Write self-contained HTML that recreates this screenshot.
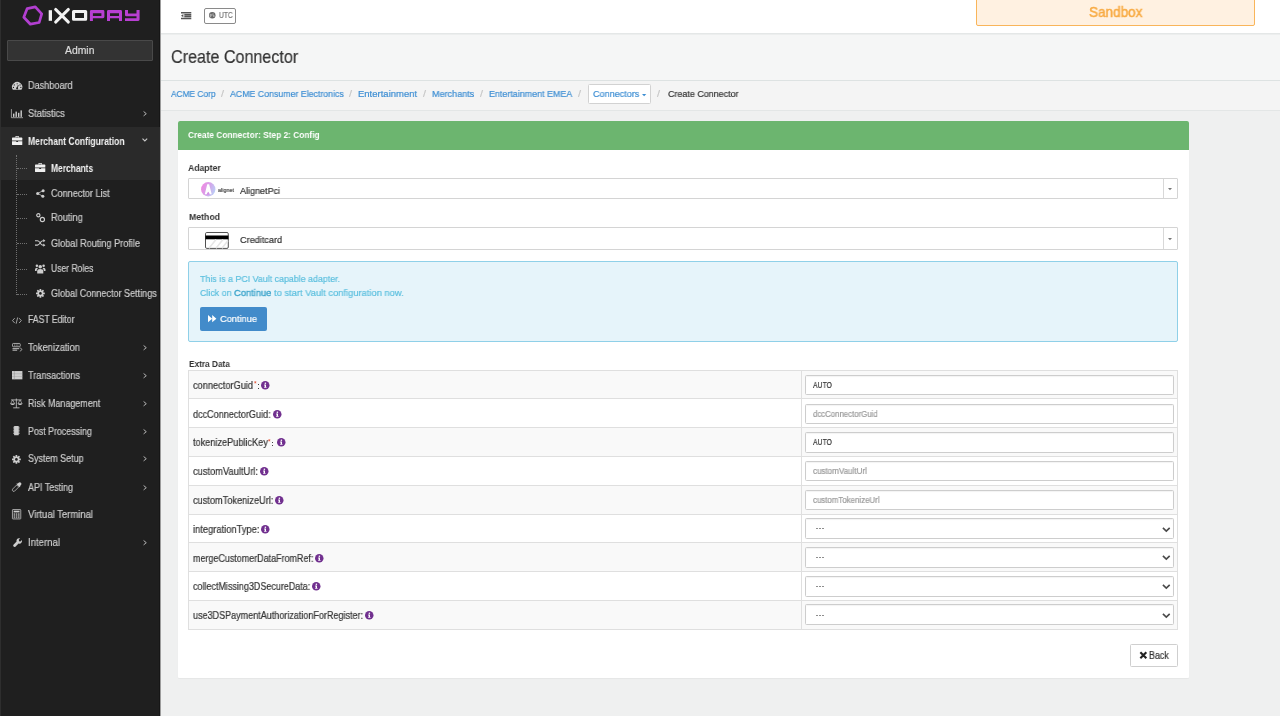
<!DOCTYPE html>
<html><head><meta charset="utf-8"><title>Create Connector</title>
<style>
*{box-sizing:border-box;margin:0;padding:0}
html,body{width:1280px;height:716px;overflow:hidden;background:#eff0f0;font-family:"Liberation Sans",sans-serif;color:#333}
.tx{position:absolute;white-space:nowrap;will-change:transform;-webkit-text-stroke-width:0.2px}
.ic{position:absolute;overflow:visible}
.bx{position:absolute}
</style></head><body>
<div class="bx" style="left:0;top:0;width:160px;height:716px;background:#1f1f1f"></div>
<div class="bx" style="left:0;top:0;width:1px;height:716px;background:#2e2e2e"></div>
<div class="bx" style="left:159px;top:0;width:1px;height:716px;background:#161616"></div>
<div class="bx" style="left:160px;top:0;width:1px;height:716px;background:#9c9c9c"></div>
<div class="bx" style="left:1px;top:126.6px;width:158.6px;height:53.5px;background:#2a2a2a"></div>
<svg class="ic" style="left:0px;top:0px;width:160px;height:30px;" viewBox="0 0 160 30"><path d="M27.2,8.6 L35.3,6.9 L41.7,13.8 L39.2,22.5 L30.4,24.2 L23.8,17.2 Z" fill="none" stroke="#b23fd0" stroke-width="2.7" stroke-linejoin="round"/><rect x="48.7" y="10.2" width="3.3" height="10.6" fill="#f2f2f2"/><path d="M55.6,9.4 L68.4,22.1 M68.4,9.4 L55.6,22.1" stroke="#f2f2f2" stroke-width="2.9" stroke-linecap="round"/><path d="M73.6,9.9 L85.6,9.9 Q87.2,9.9 87.2,11.5 L87.2,19.2 Q87.2,20.8 85.6,20.8 L73.6,20.8 Q72,20.8 72,19.2 L72,11.5 Q72,9.9 73.6,9.9 Z M75.1,13 L75.1,17.9 L84,17.9 L84,13 Z" fill="#f2f2f2" fill-rule="evenodd"/><g fill="#b83fd2" fill-rule="evenodd"><path d="M89.9,21 L89.9,11.4 Q89.9,10 91.3,10 L103,10 Q104.4,10 104.4,11.4 L104.4,16.8 Q104.4,18.2 103,18.2 L92.9,18.2 L92.9,21 Z M92.9,13.2 L92.9,16.1 L101.4,16.1 L101.4,13.2 Z"/><path d="M107,21 L107,11.4 Q107,10 108.4,10 L120.6,10 Q122,10 122,11.4 L122,21 L119,21 L119,18.2 L110,18.2 L110,21 Z M110,13.2 L110,16.1 L119,16.1 L119,13.2 Z"/><path d="M125,10 L128,10 L128,13.4 L136.5,13.4 L136.5,10 L139.6,10 L139.6,19.6 Q139.6,21 138.2,21 L125,21 L125,18.2 L136.5,18.2 L136.5,16.3 L126.4,16.3 Q125,16.3 125,14.9 Z"/></g></svg>
<div class="bx" style="left:7px;top:40px;width:146px;height:21px;background:#333;border:1px solid #494949;border-radius:1px"></div>
<div class="tx" style="left:65.00px;top:44px;font-size:10.4px;line-height:13.52px;letter-spacing:0.000px;color:#dcdcdc;font-weight:normal;transform:scaleX(0.9972);transform-origin:0 0;">Admin</div>
<div class="tx" style="left:27.65px;top:79px;font-size:10.0px;line-height:13.0px;letter-spacing:0.000px;color:#cdcdcd;font-weight:normal;transform:scaleX(0.9126);transform-origin:0 0;">Dashboard</div>
<div class="tx" style="left:27.65px;top:107px;font-size:10.0px;line-height:13.0px;letter-spacing:0.000px;color:#cdcdcd;font-weight:normal;transform:scaleX(0.9188);transform-origin:0 0;">Statistics</div>
<svg class="ic" style="left:142.8px;top:110.9px;width:4.2px;height:5.4px;" viewBox="0 0 4.2 5.4"><path d="M0.6,0.5 L3.3,2.7 L0.6,4.9" fill="none" stroke="#b5b5b5" stroke-width="1"/></svg>
<div class="tx" style="left:27.65px;top:135px;font-size:10.0px;line-height:13.0px;letter-spacing:0.000px;color:#f2f2f2;font-weight:bold;transform:scaleX(0.8561);transform-origin:0 0;-webkit-text-stroke-width:0;">Merchant Configuration</div>
<svg class="ic" style="left:142px;top:138.3px;width:5.7px;height:3.7px;" viewBox="0 0 5.7 3.7"><path d="M0.5,0.6 L2.85,3.0 L5.2,0.6" fill="none" stroke="#c8c8c8" stroke-width="1.1"/></svg>
<div class="tx" style="left:27.65px;top:313px;font-size:10.0px;line-height:13.0px;letter-spacing:0.000px;color:#cdcdcd;font-weight:normal;transform:scaleX(0.8646);transform-origin:0 0;">FAST Editor</div>
<div class="tx" style="left:27.65px;top:341px;font-size:10.0px;line-height:13.0px;letter-spacing:0.000px;color:#cdcdcd;font-weight:normal;transform:scaleX(0.9344);transform-origin:0 0;">Tokenization</div>
<svg class="ic" style="left:142.8px;top:344.9px;width:4.2px;height:5.4px;" viewBox="0 0 4.2 5.4"><path d="M0.6,0.5 L3.3,2.7 L0.6,4.9" fill="none" stroke="#b5b5b5" stroke-width="1"/></svg>
<div class="tx" style="left:27.65px;top:369px;font-size:10.0px;line-height:13.0px;letter-spacing:0.000px;color:#cdcdcd;font-weight:normal;transform:scaleX(0.9134);transform-origin:0 0;">Transactions</div>
<svg class="ic" style="left:142.8px;top:373.0px;width:4.2px;height:5.4px;" viewBox="0 0 4.2 5.4"><path d="M0.6,0.5 L3.3,2.7 L0.6,4.9" fill="none" stroke="#b5b5b5" stroke-width="1"/></svg>
<div class="tx" style="left:27.65px;top:397px;font-size:10.0px;line-height:13.0px;letter-spacing:0.000px;color:#cdcdcd;font-weight:normal;transform:scaleX(0.8964);transform-origin:0 0;">Risk Management</div>
<svg class="ic" style="left:142.8px;top:400.79999999999995px;width:4.2px;height:5.4px;" viewBox="0 0 4.2 5.4"><path d="M0.6,0.5 L3.3,2.7 L0.6,4.9" fill="none" stroke="#b5b5b5" stroke-width="1"/></svg>
<div class="tx" style="left:27.65px;top:425px;font-size:10.0px;line-height:13.0px;letter-spacing:0.000px;color:#cdcdcd;font-weight:normal;transform:scaleX(0.8824);transform-origin:0 0;">Post Processing</div>
<svg class="ic" style="left:142.8px;top:428.7px;width:4.2px;height:5.4px;" viewBox="0 0 4.2 5.4"><path d="M0.6,0.5 L3.3,2.7 L0.6,4.9" fill="none" stroke="#b5b5b5" stroke-width="1"/></svg>
<div class="tx" style="left:27.65px;top:452px;font-size:10.0px;line-height:13.0px;letter-spacing:0.000px;color:#cdcdcd;font-weight:normal;transform:scaleX(0.8924);transform-origin:0 0;">System Setup</div>
<svg class="ic" style="left:142.8px;top:456.4px;width:4.2px;height:5.4px;" viewBox="0 0 4.2 5.4"><path d="M0.6,0.5 L3.3,2.7 L0.6,4.9" fill="none" stroke="#b5b5b5" stroke-width="1"/></svg>
<div class="tx" style="left:27.65px;top:481px;font-size:10.0px;line-height:13.0px;letter-spacing:0.000px;color:#cdcdcd;font-weight:normal;transform:scaleX(0.8938);transform-origin:0 0;">API Testing</div>
<svg class="ic" style="left:142.8px;top:484.59999999999997px;width:4.2px;height:5.4px;" viewBox="0 0 4.2 5.4"><path d="M0.6,0.5 L3.3,2.7 L0.6,4.9" fill="none" stroke="#b5b5b5" stroke-width="1"/></svg>
<div class="tx" style="left:27.65px;top:508px;font-size:10.0px;line-height:13.0px;letter-spacing:0.000px;color:#cdcdcd;font-weight:normal;transform:scaleX(0.9475);transform-origin:0 0;">Virtual Terminal</div>
<div class="tx" style="left:27.65px;top:536px;font-size:10.0px;line-height:13.0px;letter-spacing:0.000px;color:#cdcdcd;font-weight:normal;transform:scaleX(0.9580);transform-origin:0 0;">Internal</div>
<svg class="ic" style="left:142.8px;top:540.0px;width:4.2px;height:5.4px;" viewBox="0 0 4.2 5.4"><path d="M0.6,0.5 L3.3,2.7 L0.6,4.9" fill="none" stroke="#b5b5b5" stroke-width="1"/></svg>
<div class="tx" style="left:50.90px;top:162px;font-size:10.0px;line-height:13.0px;letter-spacing:0.000px;color:#f5f5f5;font-weight:bold;transform:scaleX(0.8436);transform-origin:0 0;-webkit-text-stroke-width:0;">Merchants</div>
<div class="bx" style="left:16.5px;top:168.4px;width:10px;height:0;border-top:1px dotted #707070"></div>
<div class="tx" style="left:50.90px;top:187px;font-size:10.0px;line-height:13.0px;letter-spacing:0.000px;color:#cdcdcd;font-weight:normal;transform:scaleX(0.9089);transform-origin:0 0;">Connector List</div>
<div class="bx" style="left:16.5px;top:193.5px;width:10px;height:0;border-top:1px dotted #707070"></div>
<div class="tx" style="left:50.90px;top:211px;font-size:10.0px;line-height:13.0px;letter-spacing:0.000px;color:#cdcdcd;font-weight:normal;transform:scaleX(0.9210);transform-origin:0 0;">Routing</div>
<div class="bx" style="left:16.5px;top:217.9px;width:10px;height:0;border-top:1px dotted #707070"></div>
<div class="tx" style="left:50.90px;top:237px;font-size:10.0px;line-height:13.0px;letter-spacing:0.000px;color:#cdcdcd;font-weight:normal;transform:scaleX(0.9149);transform-origin:0 0;">Global Routing Profile</div>
<div class="bx" style="left:16.5px;top:243.2px;width:10px;height:0;border-top:1px dotted #707070"></div>
<div class="tx" style="left:50.90px;top:262px;font-size:10.0px;line-height:13.0px;letter-spacing:0.000px;color:#cdcdcd;font-weight:normal;transform:scaleX(0.8554);transform-origin:0 0;">User Roles</div>
<div class="bx" style="left:16.5px;top:268.6px;width:10px;height:0;border-top:1px dotted #707070"></div>
<div class="tx" style="left:50.90px;top:287px;font-size:10.0px;line-height:13.0px;letter-spacing:0.000px;color:#cdcdcd;font-weight:normal;transform:scaleX(0.9062);transform-origin:0 0;">Global Connector Settings</div>
<div class="bx" style="left:16.5px;top:293.6px;width:10px;height:0;border-top:1px dotted #707070"></div>
<div class="bx" style="left:15.5px;top:155px;width:0;height:139.5px;border-left:1px dotted #707070"></div>
<svg class="ic" style="left:11.9px;top:82.4px;width:10.3px;height:7.8px;" viewBox="0 0 20 15.2"><path d="M1.6,15.2 A10,10 0 1 1 18.4,15.2 Z" fill="#cdcdcd"/><circle cx="10" cy="3.4" r="1.2" fill="#1f1f1f"/><circle cx="4.4" cy="5.8" r="1.2" fill="#1f1f1f"/><circle cx="15.6" cy="5.8" r="1.2" fill="#1f1f1f"/><circle cx="2.8" cy="10.6" r="1.2" fill="#1f1f1f"/><circle cx="17.2" cy="10.6" r="1.2" fill="#1f1f1f"/><path d="M10,12.4 L12.2,6" stroke="#1f1f1f" stroke-width="1.8"/><circle cx="10" cy="12.4" r="2" fill="#1f1f1f"/></svg>
<svg class="ic" style="left:11px;top:108.8px;width:12px;height:9.2px;" viewBox="0 0 24 18"><path d="M0.8,0 L0.8,17.2 L24,17.2" fill="none" stroke="#cdcdcd" stroke-width="1.4"/><rect x="4" y="9" width="2.8" height="6.6" fill="#cdcdcd"/><rect x="9" y="5" width="2.8" height="10.6" fill="#cdcdcd"/><rect x="14" y="7.4" width="2.8" height="8.2" fill="#cdcdcd"/><rect x="19" y="2.6" width="2.8" height="13" fill="#cdcdcd"/></svg>
<svg class="ic" style="left:11.9px;top:136px;width:10.3px;height:9px;" viewBox="0 0 20 17.5"><path d="M6.6,3 L6.6,1.2 Q6.6,0 7.8,0 L12.2,0 Q13.4,0 13.4,1.2 L13.4,3 L11.8,3 L11.8,1.4 L8.2,1.4 L8.2,3 Z" fill="#f0f0f0"/><path d="M1.2,3 L18.8,3 Q20,3 20,4.2 L20,8.6 L0,8.6 L0,4.2 Q0,3 1.2,3 Z" fill="#f0f0f0"/><path d="M0,10 L8.2,10 L8.2,11.6 L11.8,11.6 L11.8,10 L20,10 L20,16.3 Q20,17.5 18.8,17.5 L1.2,17.5 Q0,17.5 0,16.3 Z" fill="#f0f0f0"/></svg>
<svg class="ic" style="left:12px;top:316.8px;width:9.8px;height:7.2px;" viewBox="0 0 20 14"><path d="M5.5,2 L1,7 L5.5,12 M14.5,2 L19,7 L14.5,12 M11.6,0.6 L8.4,13.4" fill="none" stroke="#cdcdcd" stroke-width="1.5"/></svg>
<svg class="ic" style="left:12.2px;top:342.8px;width:10.3px;height:9px;" viewBox="0 0 20 17.5"><rect x="1" y="0.9" width="15" height="6.4" rx="1.6" fill="none" stroke="#cdcdcd" stroke-width="1.5"/><path d="M4,4.1 L13,4.1" stroke="#cdcdcd" stroke-width="1.4" stroke-dasharray="2 1.2"/><path d="M1,11 L14,11 M1,14 L10,14" stroke="#cdcdcd" stroke-width="1.8"/><path d="M16,9 L19,12.4 L16,16.4" fill="none" stroke="#cdcdcd" stroke-width="1.6"/></svg>
<svg class="ic" style="left:11.9px;top:370.8px;width:10.4px;height:8.4px;" viewBox="0 0 20 16"><rect x="0" y="0" width="20" height="16" fill="#cdcdcd"/><path d="M0,5.2 L20,5.2 M0,10.6 L20,10.6" stroke="#9a9a9a" stroke-width="0.8"/><path d="M4.5,0 L4.5,16" stroke="#8a8a8a" stroke-width="1"/></svg>
<svg class="ic" style="left:10.2px;top:398.2px;width:12.7px;height:10.6px;" viewBox="0 0 24 20"><path d="M12,1 L12,18.5 M6,18.6 L18,18.6 M2,3.6 L22,3.6" stroke="#cdcdcd" stroke-width="1.5" fill="none"/><path d="M5,3.6 L1,11 L9,11 Z M19,3.6 L15,11 L23,11 Z" fill="none" stroke="#cdcdcd" stroke-width="1.2"/><path d="M0.8,11 Q5,15.6 9.2,11 Z M14.8,11 Q19,15.6 23.2,11 Z" fill="#cdcdcd"/></svg>
<svg class="ic" style="left:13px;top:426.4px;width:6.8px;height:9.3px;" viewBox="0 0 13 18"><rect x="2" y="0" width="9" height="18" rx="1" fill="#cdcdcd"/><path d="M0,2.5 L13,2.5 M0,5.5 L13,5.5 M0,8.5 L13,8.5 M0,11.5 L13,11.5 M0,14.5 L13,14.5" stroke="#cdcdcd" stroke-width="1.2"/></svg>
<svg class="ic" style="left:12.4px;top:455.2px;width:8.8px;height:8.8px;" viewBox="0 0 20 20"><g fill="#cdcdcd"><circle cx="10" cy="10" r="6.8"/><rect x="8" y="0" width="4" height="20" rx="0.6"/><rect x="8" y="0" width="4" height="20" rx="0.6" transform="rotate(45 10 10)"/><rect x="8" y="0" width="4" height="20" rx="0.6" transform="rotate(90 10 10)"/><rect x="8" y="0" width="4" height="20" rx="0.6" transform="rotate(135 10 10)"/></g><circle cx="10" cy="10" r="3" fill="#1f1f1f"/></svg>
<svg class="ic" style="left:12.4px;top:482.2px;width:9.8px;height:9.6px;" viewBox="0 0 20 20"><path d="M13.5,1.5 Q16,-0.8 18.5,1.5 Q20.8,4 18.5,6.5 L16.3,8.7 L17.3,9.7 L15.9,11.1 L8.9,4.1 L10.3,2.7 L11.3,3.7 Z" fill="#cdcdcd"/><path d="M9.6,6.2 L13.8,10.4 L5,19.2 L2,19.4 L0.8,18.2 L0.8,15 Z" fill="none" stroke="#cdcdcd" stroke-width="1.5"/></svg>
<svg class="ic" style="left:11.9px;top:509.3px;width:9.2px;height:10.5px;" viewBox="0 0 18 20"><rect x="0.8" y="0.8" width="16.4" height="18.4" rx="1" fill="none" stroke="#cdcdcd" stroke-width="1.5"/><rect x="3.2" y="3" width="11.6" height="3.4" fill="#cdcdcd"/><g fill="#cdcdcd"><rect x="3.2" y="8.4" width="3" height="2.4"/><rect x="7.5" y="8.4" width="3" height="2.4"/><rect x="11.8" y="8.4" width="3" height="2.4"/><rect x="3.2" y="12.2" width="3" height="2.4"/><rect x="7.5" y="12.2" width="3" height="2.4"/><rect x="11.8" y="12.2" width="3" height="2.4"/><rect x="3.2" y="16" width="3" height="1.6"/><rect x="7.5" y="16" width="3" height="1.6"/><rect x="11.8" y="16" width="3" height="1.6"/></g></svg>
<svg class="ic" style="left:13px;top:537.9px;width:9.2px;height:9.2px;" viewBox="0 0 20 20"><path d="M19.4,4.6 L16.2,7.6 L13.2,7 L12.6,4 L15.6,0.8 Q11.6,-0.6 9,2 Q6.8,4.4 7.8,7.6 L1,14.6 Q-0.6,16.4 1.2,18.6 Q3.4,20.4 5.2,18.8 L12.2,12 Q15.6,13 17.8,10.8 Q20.6,8.2 19.4,4.6 Z" fill="#cdcdcd"/></svg>
<svg class="ic" style="left:35.1px;top:162.9px;width:10.3px;height:9px;" viewBox="0 0 20 17.5"><path d="M6.6,3 L6.6,1.2 Q6.6,0 7.8,0 L12.2,0 Q13.4,0 13.4,1.2 L13.4,3 L11.8,3 L11.8,1.4 L8.2,1.4 L8.2,3 Z" fill="#f0f0f0"/><path d="M1.2,3 L18.8,3 Q20,3 20,4.2 L20,8.6 L0,8.6 L0,4.2 Q0,3 1.2,3 Z" fill="#f0f0f0"/><path d="M0,10 L8.2,10 L8.2,11.6 L11.8,11.6 L11.8,10 L20,10 L20,16.3 Q20,17.5 18.8,17.5 L1.2,17.5 Q0,17.5 0,16.3 Z" fill="#f0f0f0"/></svg>
<svg class="ic" style="left:35.7px;top:189px;width:8.8px;height:8.8px;" viewBox="0 0 18 18"><circle cx="14.6" cy="3.4" r="3.1" fill="#cdcdcd"/><circle cx="3.4" cy="9" r="3.1" fill="#cdcdcd"/><circle cx="14" cy="14.8" r="3.1" fill="#cdcdcd"/><path d="M14.6,3.4 L3.4,9 L14,14.8" stroke="#cdcdcd" stroke-width="1.5" fill="none"/></svg>
<svg class="ic" style="left:35.5px;top:212.9px;width:9.2px;height:9.2px;" viewBox="0 0 9.2 9.2"><circle cx="2.35" cy="2.3" r="1.65" fill="none" stroke="#cdcdcd" stroke-width="1.15"/><circle cx="6.4" cy="6.5" r="2.1" fill="none" stroke="#cdcdcd" stroke-width="1.15"/></svg>
<svg class="ic" style="left:34.8px;top:239px;width:10.4px;height:7.8px;" viewBox="0 0 20 15"><path d="M0,3.2 L4.6,3.2 Q7,3.2 9,6.2 L11,9 Q13,11.8 15.4,11.8 L17,11.8 M0,11.8 L4.6,11.8 Q7,11.8 9,8.8 L11,6 Q13,3.2 15.4,3.2 L17,3.2" fill="none" stroke="#cdcdcd" stroke-width="2"/><path d="M16,0 L20,3.2 L16,6.4 Z M16,8.6 L20,11.8 L16,15 Z" fill="#cdcdcd"/></svg>
<svg class="ic" style="left:34.8px;top:263.7px;width:10.5px;height:9.6px;" viewBox="0 0 20 18"><circle cx="10" cy="5.2" r="3.4" fill="#cdcdcd"/><path d="M4.2,18 L4.2,13.4 Q4.2,9.4 10,9.4 Q15.8,9.4 15.8,13.4 L15.8,18 Z" fill="#cdcdcd"/><circle cx="3.6" cy="3.4" r="2.4" fill="#cdcdcd"/><circle cx="16.4" cy="3.4" r="2.4" fill="#cdcdcd"/><path d="M0,13 L0,10.4 Q0,7 3.8,7 L5.6,7.8 Q3,9.6 3,13 Z M20,13 L20,10.4 Q20,7 16.2,7 L14.4,7.8 Q17,9.6 17,13 Z" fill="#cdcdcd"/></svg>
<svg class="ic" style="left:35.8px;top:289.2px;width:8.8px;height:8.8px;" viewBox="0 0 20 20"><g fill="#cdcdcd"><circle cx="10" cy="10" r="6.8"/><rect x="8" y="0" width="4" height="20" rx="0.6"/><rect x="8" y="0" width="4" height="20" rx="0.6" transform="rotate(45 10 10)"/><rect x="8" y="0" width="4" height="20" rx="0.6" transform="rotate(90 10 10)"/><rect x="8" y="0" width="4" height="20" rx="0.6" transform="rotate(135 10 10)"/></g><circle cx="10" cy="10" r="3" fill="#1f1f1f"/></svg>
<div class="bx" style="left:161px;top:0;width:1119px;height:33px;background:#fff"></div>
<div class="bx" style="left:161px;top:33px;width:1119px;height:1px;background:#e4e7e7"></div>
<div class="bx" style="left:161px;top:34px;width:1119px;height:1px;background:#eceeee"></div>
<svg class="ic" style="left:181px;top:11.6px;width:10.3px;height:7.3px;" viewBox="0 0 20 14.2"><path d="M0,1.4 L20,1.4 M6.4,5.5 L20,5.5 M6.4,8.9 L20,8.9 M0,12.8 L20,12.8" stroke="#555" stroke-width="2.8"/><path d="M0,7.2 L4.6,4.1 L4.6,10.3 Z" fill="#555"/></svg>
<div class="bx" style="left:204px;top:8px;width:31.8px;height:16.2px;border:1px solid #8a8a8a;border-radius:2px;background:#fff"></div>
<svg class="ic" style="left:209px;top:12px;width:6.5px;height:6.5px;" viewBox="0 0 20 20"><circle cx="10" cy="10" r="10" fill="#666"/><path d="M3,6 Q7,4 9,8 Q10,11 7,13 L6,18 Q2,15 1.5,10 Z M12,2 Q16,5 13,8 Q17,9 18,13 Q15,17 13,15 Q12,11 10,9 Z" fill="#aaa"/></svg>
<div class="tx" style="left:219.20px;top:10px;font-size:8.6px;line-height:11.18px;letter-spacing:0.000px;color:#777;font-weight:normal;transform:scaleX(0.7809);transform-origin:0 0;">UTC</div>
<div class="bx" style="left:976px;top:-2px;width:279px;height:27.8px;border:1px solid #f9b55a;border-radius:2px;background:#fff1e1"></div>
<div class="tx" style="left:1088.60px;top:3px;font-size:14.2px;line-height:18.46px;letter-spacing:0.000px;color:#f8ab44;font-weight:normal;transform:scaleX(0.9526);transform-origin:0 0;-webkit-text-stroke-width:0.5px;">Sandbox</div>
<div class="bx" style="left:161px;top:35px;width:1119px;height:45px;background:#f5f6f6"></div>
<div class="bx" style="left:161px;top:80px;width:1119px;height:1px;background:#dde2e2"></div>
<div class="tx" style="left:171.25px;top:46px;font-size:18.2px;line-height:23.66px;letter-spacing:0.000px;color:#333;font-weight:normal;transform:scaleX(0.8859);transform-origin:0 0;">Create Connector</div>
<div class="bx" style="left:161px;top:81px;width:1119px;height:29px;background:#f4f4f4"></div>
<div class="bx" style="left:161px;top:110px;width:1119px;height:1px;background:#e3e6e6"></div>
<div class="tx" style="left:170.50px;top:88px;font-size:9.5px;line-height:12.35px;letter-spacing:0.000px;color:#3d8ed3;font-weight:normal;transform:scaleX(0.8780);transform-origin:0 0;">ACME Corp</div>
<div class="tx" style="left:229.50px;top:88px;font-size:9.5px;line-height:12.35px;letter-spacing:0.000px;color:#3d8ed3;font-weight:normal;transform:scaleX(0.9248);transform-origin:0 0;">ACME Consumer Electronics</div>
<div class="tx" style="left:358.00px;top:88px;font-size:9.5px;line-height:12.35px;letter-spacing:0.000px;color:#3d8ed3;font-weight:normal;transform:scaleX(0.9977);transform-origin:0 0;">Entertainment</div>
<div class="tx" style="left:431.50px;top:88px;font-size:9.5px;line-height:12.35px;letter-spacing:0.000px;color:#3d8ed3;font-weight:normal;transform:scaleX(0.9528);transform-origin:0 0;">Merchants</div>
<div class="tx" style="left:488.60px;top:88px;font-size:9.5px;line-height:12.35px;letter-spacing:0.000px;color:#3d8ed3;font-weight:normal;transform:scaleX(0.9391);transform-origin:0 0;">Entertainment EMEA</div>
<div class="tx" style="left:221.00px;top:88px;font-size:9.5px;line-height:12.35px;letter-spacing:0.000px;color:#c6c6c6;font-weight:normal;transform:scaleX(1.1278);transform-origin:0 0;">/</div>
<div class="tx" style="left:349.00px;top:88px;font-size:9.5px;line-height:12.35px;letter-spacing:0.000px;color:#c6c6c6;font-weight:normal;transform:scaleX(1.1278);transform-origin:0 0;">/</div>
<div class="tx" style="left:422.75px;top:88px;font-size:9.5px;line-height:12.35px;letter-spacing:0.000px;color:#c6c6c6;font-weight:normal;transform:scaleX(1.1278);transform-origin:0 0;">/</div>
<div class="tx" style="left:479.50px;top:88px;font-size:9.5px;line-height:12.35px;letter-spacing:0.000px;color:#c6c6c6;font-weight:normal;transform:scaleX(1.1278);transform-origin:0 0;">/</div>
<div class="tx" style="left:577.90px;top:88px;font-size:9.5px;line-height:12.35px;letter-spacing:0.000px;color:#c6c6c6;font-weight:normal;transform:scaleX(1.1278);transform-origin:0 0;">/</div>
<div class="tx" style="left:656.80px;top:88px;font-size:9.5px;line-height:12.35px;letter-spacing:0.000px;color:#c6c6c6;font-weight:normal;transform:scaleX(1.1278);transform-origin:0 0;">/</div>
<div class="bx" style="left:588.1px;top:84.4px;width:62.6px;height:19.4px;border:1px solid #d2d2d2;border-radius:1.5px;background:#fff"></div>
<div class="tx" style="left:592.70px;top:88px;font-size:9.5px;line-height:12.35px;letter-spacing:0.000px;color:#3d8ed3;font-weight:normal;transform:scaleX(0.9528);transform-origin:0 0;">Connectors</div>
<svg class="ic" style="left:641.7px;top:94.2px;width:4.3px;height:2.3px;" viewBox="0 0 4.3 2.3"><path d="M0,0 L4.3,0 L2.15,2.3 Z" fill="#3d8ed3"/></svg>
<div class="tx" style="left:667.50px;top:88px;font-size:9.5px;line-height:12.35px;letter-spacing:0.000px;color:#333;font-weight:normal;transform:scaleX(0.9403);transform-origin:0 0;">Create Connector</div>
<div class="bx" style="left:178px;top:121px;width:1010.5px;height:556.7px;background:#fff;border-radius:1px;box-shadow:0 1px 1px rgba(0,0,0,0.04)"></div>
<div class="bx" style="left:178px;top:121px;width:1010.5px;height:28.6px;background:#6cb56f;border-radius:2px 2px 0 0"></div>
<div class="tx" style="left:188.10px;top:129px;font-size:9.3px;line-height:12.09px;letter-spacing:0.000px;color:#fff;font-weight:bold;transform:scaleX(0.8971);transform-origin:0 0;-webkit-text-stroke-width:0;">Create Connector: Step 2: Config</div>
<div class="tx" style="left:188.30px;top:162px;font-size:9.6px;line-height:12.48px;letter-spacing:0.000px;color:#333;font-weight:bold;transform:scaleX(0.9017);transform-origin:0 0;-webkit-text-stroke-width:0;">Adapter</div>
<div class="tx" style="left:188.60px;top:211px;font-size:9.6px;line-height:12.48px;letter-spacing:0.000px;color:#333;font-weight:bold;transform:scaleX(0.9083);transform-origin:0 0;-webkit-text-stroke-width:0;">Method</div>
<div class="bx" style="left:188.3px;top:178.1px;width:989.4px;height:20.8px;border:1px solid #d4d4d4;border-radius:1px;background:#fff"></div>
<div class="bx" style="left:1163.4px;top:179.1px;width:1px;height:18.8px;background:#d8d8d8"></div>
<svg class="ic" style="left:1168.2px;top:187.5px;width:4px;height:2.2px;" viewBox="0 0 4 2.2"><path d="M0,0 L4,0 L2,2.2 Z" fill="#777"/></svg>
<div class="bx" style="left:188.3px;top:227.4px;width:989.4px;height:22.2px;border:1px solid #d4d4d4;border-radius:1px;background:#fff"></div>
<div class="bx" style="left:1163.4px;top:228.4px;width:1px;height:20.2px;background:#d8d8d8"></div>
<svg class="ic" style="left:1168.2px;top:237.5px;width:4px;height:2.2px;" viewBox="0 0 4 2.2"><path d="M0,0 L4,0 L2,2.2 Z" fill="#777"/></svg>
<svg class="ic" style="left:200.5px;top:182.1px;width:14.5px;height:14.5px;" viewBox="0 0 20 20"><defs><linearGradient id="ag" x1="0" y1="0.3" x2="1" y2="0.7"><stop offset="0" stop-color="#ee7ade"/><stop offset="0.5" stop-color="#cf9be8"/><stop offset="1" stop-color="#b2cdf6"/></linearGradient></defs><circle cx="10" cy="10" r="9.9" fill="url(#ag)" opacity="0.9"/><path d="M8.6,3 L11.2,3 L14.8,17 L12,17 L10,13.6 L7.8,17 L5.2,17 Z" fill="#fff"/><path d="M7.8,17 L10,13.6 L12,17 Q10,18.4 7.8,17 Z" fill="#d58ee6"/></svg>
<div class="tx" style="left:217.50px;top:188px;font-size:4.8px;line-height:6.24px;letter-spacing:0.000px;color:#555;font-weight:normal;transform:scaleX(1.1309);transform-origin:0 0;">alignet</div>
<div class="tx" style="left:240.00px;top:185px;font-size:9.4px;line-height:12.22px;letter-spacing:0.000px;color:#333;font-weight:normal;transform:scaleX(0.9616);transform-origin:0 0;">AlignetPci</div>
<svg class="ic" style="left:205px;top:231.7px;width:23.8px;height:16.9px;" viewBox="0 0 23.8 16.9"><rect x="0.5" y="0.5" width="22.8" height="15.9" rx="1.3" fill="#fff" stroke="#505050" stroke-width="1"/><rect x="0.4" y="3.5" width="23" height="3.8" fill="#000"/><path d="M4,16.2 L11,7.6 M11,16.2 L18,7.6 M17,16.2 L23,8.6" stroke="#e6e6e6" stroke-width="1.6"/></svg>
<div class="tx" style="left:240.00px;top:234px;font-size:9.4px;line-height:12.22px;letter-spacing:0.000px;color:#333;font-weight:normal;transform:scaleX(0.9733);transform-origin:0 0;">Creditcard</div>
<div class="bx" style="left:188.4px;top:260.6px;width:989.2px;height:81.6px;background:#e6f4fa;border:1px solid #8fd0e8;border-radius:2px"></div>
<div class="tx" style="left:199.70px;top:273px;font-size:9.8px;line-height:12.74px;letter-spacing:0.000px;color:#5bbfde;font-weight:normal;transform:scaleX(0.9034);transform-origin:0 0;">This is a PCI Vault capable adapter.</div>
<div class="tx" style="left:199.70px;top:287px;font-size:9.8px;line-height:12.74px;letter-spacing:0.000px;color:#5bbfde;font-weight:normal;transform:scaleX(0.9035);transform-origin:0 0;">Click on</div>
<div class="tx" style="left:234.40px;top:287px;font-size:9.6px;line-height:12.48px;letter-spacing:0.000px;color:#3fa6cc;font-weight:normal;transform:scaleX(0.9733);transform-origin:0 0;-webkit-text-stroke-width:0.35px;">Continue</div>
<div class="tx" style="left:274.30px;top:287px;font-size:9.8px;line-height:12.74px;letter-spacing:0.000px;color:#5bbfde;font-weight:normal;transform:scaleX(0.9535);transform-origin:0 0;">to start Vault configuration now.</div>
<div class="bx" style="left:199.7px;top:306.6px;width:66.9px;height:24.4px;background:#428bca;border-radius:2px"></div>
<svg class="ic" style="left:208.3px;top:315px;width:8.4px;height:7.4px;" viewBox="0 0 16 14"><path d="M0,0 L8,7 L0,14 Z M8,0 L16,7 L8,14 Z" fill="#fff"/></svg>
<div class="tx" style="left:219.75px;top:313px;font-size:9.9px;line-height:12.87px;letter-spacing:0.000px;color:#fff;font-weight:normal;transform:scaleX(0.9375);transform-origin:0 0;">Continue</div>
<div class="tx" style="left:188.50px;top:359px;font-size:9.2px;line-height:11.96px;letter-spacing:0.000px;color:#333;font-weight:bold;transform:scaleX(0.8999);transform-origin:0 0;-webkit-text-stroke-width:0;">Extra Data</div>
<div class="bx" style="left:188px;top:370.10px;width:989.7px;height:28.81px;background:#f9f9f9"></div>
<div class="tx" style="left:192.50px;top:379px;font-size:10.2px;line-height:13.26px;letter-spacing:0.000px;color:#333;font-weight:normal;transform:scaleX(0.9065);transform-origin:0 0;">connectorGuid</div>
<svg class="ic" style="left:253.5px;top:381.2px;width:2.6px;height:2.6px;" viewBox="0 0 10 10"><path d="M5,0.5 L5,9.5 M1.1,2.75 L8.9,7.25 M8.9,2.75 L1.1,7.25" stroke="#e2401f" stroke-width="2"/></svg>
<div class="bx" style="left:257.5px;top:383.9px;width:1.3px;height:1.3px;background:#444"></div>
<div class="bx" style="left:257.5px;top:387.5px;width:1.3px;height:1.3px;background:#444"></div>
<svg class="ic" style="left:261.4px;top:380.755px;width:8.5px;height:8.5px;" viewBox="0 0 20 20"><circle cx="10" cy="10" r="10" fill="#71308f"/><circle cx="10.3" cy="5.2" r="1.9" fill="#fff"/><path d="M7.4,8.4 L11.8,8.4 L11.8,14 L13,14 L13,16 L7.4,16 L7.4,14 L8.6,14 L8.6,10.4 L7.4,10.4 Z" fill="#fff"/></svg>
<div class="bx" style="left:805.4px;top:374.70px;width:368.5px;height:20.2px;border:1px solid #cdcdcd;border-radius:1.5px;background:#fff;box-shadow:inset 0 1px 1px rgba(0,0,0,0.05)"></div>
<div class="tx" style="left:813.20px;top:380px;font-size:8.4px;line-height:10.92px;letter-spacing:0.000px;color:#333;font-weight:normal;transform:scaleX(0.8195);transform-origin:0 0;">AUTO</div>
<div class="bx" style="left:188px;top:398.91px;width:989.7px;height:28.81px;background:#ffffff"></div>
<div class="tx" style="left:192.50px;top:408px;font-size:10.2px;line-height:13.26px;letter-spacing:0.000px;color:#333;font-weight:normal;transform:scaleX(0.8899);transform-origin:0 0;">dccConnectorGuid:</div>
<svg class="ic" style="left:272.8px;top:409.565px;width:8.5px;height:8.5px;" viewBox="0 0 20 20"><circle cx="10" cy="10" r="10" fill="#71308f"/><circle cx="10.3" cy="5.2" r="1.9" fill="#fff"/><path d="M7.4,8.4 L11.8,8.4 L11.8,14 L13,14 L13,16 L7.4,16 L7.4,14 L8.6,14 L8.6,10.4 L7.4,10.4 Z" fill="#fff"/></svg>
<div class="bx" style="left:805.4px;top:403.51px;width:368.5px;height:20.2px;border:1px solid #cdcdcd;border-radius:1.5px;background:#fff;box-shadow:inset 0 1px 1px rgba(0,0,0,0.05)"></div>
<div class="tx" style="left:813.20px;top:409px;font-size:8.4px;line-height:10.92px;letter-spacing:0.000px;color:#9a9a9a;font-weight:normal;transform:scaleX(0.9314);transform-origin:0 0;">dccConnectorGuid</div>
<div class="bx" style="left:188px;top:427.72px;width:989.7px;height:28.81px;background:#f9f9f9"></div>
<div class="tx" style="left:192.50px;top:436px;font-size:10.2px;line-height:13.26px;letter-spacing:0.000px;color:#333;font-weight:normal;transform:scaleX(0.8985);transform-origin:0 0;">tokenizePublicKey</div>
<svg class="ic" style="left:268px;top:438.82px;width:2.6px;height:2.6px;" viewBox="0 0 10 10"><path d="M5,0.5 L5,9.5 M1.1,2.75 L8.9,7.25 M8.9,2.75 L1.1,7.25" stroke="#e2401f" stroke-width="2"/></svg>
<div class="bx" style="left:272.1px;top:441.5px;width:1.3px;height:1.3px;background:#444"></div>
<div class="bx" style="left:272.1px;top:445.1px;width:1.3px;height:1.3px;background:#444"></div>
<svg class="ic" style="left:276.6px;top:438.375px;width:8.5px;height:8.5px;" viewBox="0 0 20 20"><circle cx="10" cy="10" r="10" fill="#71308f"/><circle cx="10.3" cy="5.2" r="1.9" fill="#fff"/><path d="M7.4,8.4 L11.8,8.4 L11.8,14 L13,14 L13,16 L7.4,16 L7.4,14 L8.6,14 L8.6,10.4 L7.4,10.4 Z" fill="#fff"/></svg>
<div class="bx" style="left:805.4px;top:432.32px;width:368.5px;height:20.2px;border:1px solid #cdcdcd;border-radius:1.5px;background:#fff;box-shadow:inset 0 1px 1px rgba(0,0,0,0.05)"></div>
<div class="tx" style="left:813.20px;top:437px;font-size:8.4px;line-height:10.92px;letter-spacing:0.000px;color:#333;font-weight:normal;transform:scaleX(0.8195);transform-origin:0 0;">AUTO</div>
<div class="bx" style="left:188px;top:456.53px;width:989.7px;height:28.81px;background:#ffffff"></div>
<div class="tx" style="left:192.50px;top:465px;font-size:10.2px;line-height:13.26px;letter-spacing:0.000px;color:#333;font-weight:normal;transform:scaleX(0.9140);transform-origin:0 0;">customVaultUrl:</div>
<svg class="ic" style="left:260.4px;top:467.185px;width:8.5px;height:8.5px;" viewBox="0 0 20 20"><circle cx="10" cy="10" r="10" fill="#71308f"/><circle cx="10.3" cy="5.2" r="1.9" fill="#fff"/><path d="M7.4,8.4 L11.8,8.4 L11.8,14 L13,14 L13,16 L7.4,16 L7.4,14 L8.6,14 L8.6,10.4 L7.4,10.4 Z" fill="#fff"/></svg>
<div class="bx" style="left:805.4px;top:461.13px;width:368.5px;height:20.2px;border:1px solid #cdcdcd;border-radius:1.5px;background:#fff;box-shadow:inset 0 1px 1px rgba(0,0,0,0.05)"></div>
<div class="tx" style="left:813.20px;top:466px;font-size:8.4px;line-height:10.92px;letter-spacing:0.000px;color:#9a9a9a;font-weight:normal;transform:scaleX(0.9588);transform-origin:0 0;">customVaultUrl</div>
<div class="bx" style="left:188px;top:485.34px;width:989.7px;height:28.81px;background:#f9f9f9"></div>
<div class="tx" style="left:192.50px;top:494px;font-size:10.2px;line-height:13.26px;letter-spacing:0.000px;color:#333;font-weight:normal;transform:scaleX(0.9045);transform-origin:0 0;">customTokenizeUrl:</div>
<svg class="ic" style="left:275.2px;top:495.995px;width:8.5px;height:8.5px;" viewBox="0 0 20 20"><circle cx="10" cy="10" r="10" fill="#71308f"/><circle cx="10.3" cy="5.2" r="1.9" fill="#fff"/><path d="M7.4,8.4 L11.8,8.4 L11.8,14 L13,14 L13,16 L7.4,16 L7.4,14 L8.6,14 L8.6,10.4 L7.4,10.4 Z" fill="#fff"/></svg>
<div class="bx" style="left:805.4px;top:489.94px;width:368.5px;height:20.2px;border:1px solid #cdcdcd;border-radius:1.5px;background:#fff;box-shadow:inset 0 1px 1px rgba(0,0,0,0.05)"></div>
<div class="tx" style="left:813.20px;top:495px;font-size:8.4px;line-height:10.92px;letter-spacing:0.000px;color:#9a9a9a;font-weight:normal;transform:scaleX(0.9400);transform-origin:0 0;">customTokenizeUrl</div>
<div class="bx" style="left:188px;top:514.15px;width:989.7px;height:28.81px;background:#ffffff"></div>
<div class="tx" style="left:192.50px;top:523px;font-size:10.2px;line-height:13.26px;letter-spacing:0.000px;color:#333;font-weight:normal;transform:scaleX(0.9163);transform-origin:0 0;">integrationType:</div>
<svg class="ic" style="left:261px;top:524.805px;width:8.5px;height:8.5px;" viewBox="0 0 20 20"><circle cx="10" cy="10" r="10" fill="#71308f"/><circle cx="10.3" cy="5.2" r="1.9" fill="#fff"/><path d="M7.4,8.4 L11.8,8.4 L11.8,14 L13,14 L13,16 L7.4,16 L7.4,14 L8.6,14 L8.6,10.4 L7.4,10.4 Z" fill="#fff"/></svg>
<div class="bx" style="left:805.4px;top:518.05px;width:368.5px;height:20.9px;border:1px solid #cdcdcd;border-radius:1.5px;background:#fff;box-shadow:inset 0 1px 1px rgba(0,0,0,0.05)"></div>
<div class="bx" style="left:816.0px;top:528.35px;width:2.3px;height:0.9px;background:#8e8e8e"></div>
<div class="bx" style="left:818.8px;top:528.35px;width:2.3px;height:0.9px;background:#8e8e8e"></div>
<div class="bx" style="left:821.6px;top:528.35px;width:2.3px;height:0.9px;background:#8e8e8e"></div>
<svg class="ic" style="left:1161.6px;top:526.655px;width:8.6px;height:5.2px;" viewBox="0 0 8.6 5.2"><path d="M0.9,0.9 L4.3,4.2 L7.7,0.9" fill="none" stroke="#4a4a4a" stroke-width="1.6"/></svg>
<div class="bx" style="left:188px;top:542.96px;width:989.7px;height:28.81px;background:#f9f9f9"></div>
<div class="tx" style="left:192.50px;top:552px;font-size:10.2px;line-height:13.26px;letter-spacing:0.000px;color:#333;font-weight:normal;transform:scaleX(0.8785);transform-origin:0 0;">mergeCustomerDataFromRef:</div>
<svg class="ic" style="left:315.4px;top:553.615px;width:8.5px;height:8.5px;" viewBox="0 0 20 20"><circle cx="10" cy="10" r="10" fill="#71308f"/><circle cx="10.3" cy="5.2" r="1.9" fill="#fff"/><path d="M7.4,8.4 L11.8,8.4 L11.8,14 L13,14 L13,16 L7.4,16 L7.4,14 L8.6,14 L8.6,10.4 L7.4,10.4 Z" fill="#fff"/></svg>
<div class="bx" style="left:805.4px;top:546.86px;width:368.5px;height:20.9px;border:1px solid #cdcdcd;border-radius:1.5px;background:#fff;box-shadow:inset 0 1px 1px rgba(0,0,0,0.05)"></div>
<div class="bx" style="left:816.0px;top:557.16px;width:2.3px;height:0.9px;background:#8e8e8e"></div>
<div class="bx" style="left:818.8px;top:557.16px;width:2.3px;height:0.9px;background:#8e8e8e"></div>
<div class="bx" style="left:821.6px;top:557.16px;width:2.3px;height:0.9px;background:#8e8e8e"></div>
<svg class="ic" style="left:1161.6px;top:555.465px;width:8.6px;height:5.2px;" viewBox="0 0 8.6 5.2"><path d="M0.9,0.9 L4.3,4.2 L7.7,0.9" fill="none" stroke="#4a4a4a" stroke-width="1.6"/></svg>
<div class="bx" style="left:188px;top:571.77px;width:989.7px;height:28.81px;background:#ffffff"></div>
<div class="tx" style="left:192.50px;top:580px;font-size:10.2px;line-height:13.26px;letter-spacing:0.000px;color:#333;font-weight:normal;transform:scaleX(0.8811);transform-origin:0 0;">collectMissing3DSecureData:</div>
<svg class="ic" style="left:312px;top:582.425px;width:8.5px;height:8.5px;" viewBox="0 0 20 20"><circle cx="10" cy="10" r="10" fill="#71308f"/><circle cx="10.3" cy="5.2" r="1.9" fill="#fff"/><path d="M7.4,8.4 L11.8,8.4 L11.8,14 L13,14 L13,16 L7.4,16 L7.4,14 L8.6,14 L8.6,10.4 L7.4,10.4 Z" fill="#fff"/></svg>
<div class="bx" style="left:805.4px;top:575.67px;width:368.5px;height:20.9px;border:1px solid #cdcdcd;border-radius:1.5px;background:#fff;box-shadow:inset 0 1px 1px rgba(0,0,0,0.05)"></div>
<div class="bx" style="left:816.0px;top:585.97px;width:2.3px;height:0.9px;background:#8e8e8e"></div>
<div class="bx" style="left:818.8px;top:585.97px;width:2.3px;height:0.9px;background:#8e8e8e"></div>
<div class="bx" style="left:821.6px;top:585.97px;width:2.3px;height:0.9px;background:#8e8e8e"></div>
<svg class="ic" style="left:1161.6px;top:584.275px;width:8.6px;height:5.2px;" viewBox="0 0 8.6 5.2"><path d="M0.9,0.9 L4.3,4.2 L7.7,0.9" fill="none" stroke="#4a4a4a" stroke-width="1.6"/></svg>
<div class="bx" style="left:188px;top:600.58px;width:989.7px;height:28.81px;background:#f9f9f9"></div>
<div class="tx" style="left:192.50px;top:609px;font-size:10.2px;line-height:13.26px;letter-spacing:0.000px;color:#333;font-weight:normal;transform:scaleX(0.8856);transform-origin:0 0;">use3DSPaymentAuthorizationForRegister:</div>
<svg class="ic" style="left:365.2px;top:611.235px;width:8.5px;height:8.5px;" viewBox="0 0 20 20"><circle cx="10" cy="10" r="10" fill="#71308f"/><circle cx="10.3" cy="5.2" r="1.9" fill="#fff"/><path d="M7.4,8.4 L11.8,8.4 L11.8,14 L13,14 L13,16 L7.4,16 L7.4,14 L8.6,14 L8.6,10.4 L7.4,10.4 Z" fill="#fff"/></svg>
<div class="bx" style="left:805.4px;top:604.48px;width:368.5px;height:20.9px;border:1px solid #cdcdcd;border-radius:1.5px;background:#fff;box-shadow:inset 0 1px 1px rgba(0,0,0,0.05)"></div>
<div class="bx" style="left:816.0px;top:614.78px;width:2.3px;height:0.9px;background:#8e8e8e"></div>
<div class="bx" style="left:818.8px;top:614.78px;width:2.3px;height:0.9px;background:#8e8e8e"></div>
<div class="bx" style="left:821.6px;top:614.78px;width:2.3px;height:0.9px;background:#8e8e8e"></div>
<svg class="ic" style="left:1161.6px;top:613.085px;width:8.6px;height:5.2px;" viewBox="0 0 8.6 5.2"><path d="M0.9,0.9 L4.3,4.2 L7.7,0.9" fill="none" stroke="#4a4a4a" stroke-width="1.6"/></svg>
<div class="bx" style="left:188px;top:369.60px;width:989.7px;height:1px;background:#dfdfdf"></div>
<div class="bx" style="left:188px;top:398.41px;width:989.7px;height:1px;background:#dfdfdf"></div>
<div class="bx" style="left:188px;top:427.22px;width:989.7px;height:1px;background:#dfdfdf"></div>
<div class="bx" style="left:188px;top:456.03px;width:989.7px;height:1px;background:#dfdfdf"></div>
<div class="bx" style="left:188px;top:484.84px;width:989.7px;height:1px;background:#dfdfdf"></div>
<div class="bx" style="left:188px;top:513.65px;width:989.7px;height:1px;background:#dfdfdf"></div>
<div class="bx" style="left:188px;top:542.46px;width:989.7px;height:1px;background:#dfdfdf"></div>
<div class="bx" style="left:188px;top:571.27px;width:989.7px;height:1px;background:#dfdfdf"></div>
<div class="bx" style="left:188px;top:600.08px;width:989.7px;height:1px;background:#dfdfdf"></div>
<div class="bx" style="left:188px;top:628.89px;width:989.7px;height:1px;background:#dfdfdf"></div>
<div class="bx" style="left:187.5px;top:369.60px;width:1px;height:260.3px;background:#dfdfdf"></div>
<div class="bx" style="left:800.8px;top:369.60px;width:1px;height:260.3px;background:#dfdfdf"></div>
<div class="bx" style="left:1177.2px;top:369.60px;width:1px;height:260.3px;background:#dfdfdf"></div>
<div class="bx" style="left:1130.3px;top:644.1px;width:47.3px;height:22.5px;border:1px solid #cfcfcf;border-radius:1.5px;background:#fff"></div>
<svg class="ic" style="left:1139.7px;top:651.9px;width:6.7px;height:6.6px;" viewBox="0 0 10 10"><path d="M1.6,1.6 L8.4,8.4 M8.4,1.6 L1.6,8.4" stroke="#222" stroke-width="3.2" stroke-linecap="square"/></svg>
<div class="tx" style="left:1148.90px;top:649px;font-size:10.0px;line-height:13.0px;letter-spacing:0.000px;color:#333;font-weight:normal;transform:scaleX(0.8854);transform-origin:0 0;">Back</div>
</body></html>
